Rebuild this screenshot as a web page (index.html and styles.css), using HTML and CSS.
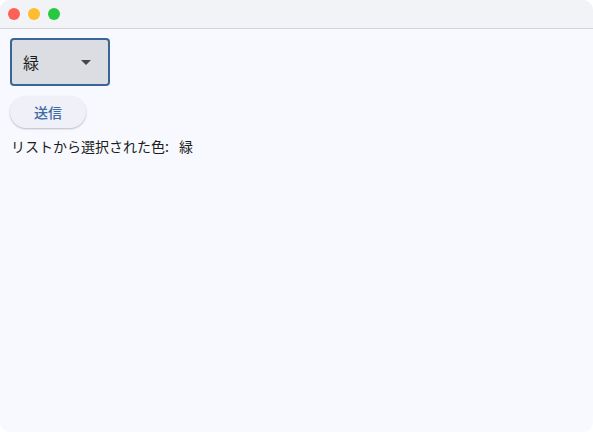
FILE: index.html
```html
<!DOCTYPE html>
<html lang="ja">
<head>
<meta charset="utf-8">
<link rel="stylesheet" href="styles.css">
</head>
<body>
<div class="window">
  <div class="titlebar">
    <span class="dot red"></span>
    <span class="dot yellow"></span>
    <span class="dot green"></span>
  </div>
  <div class="content">
    <div class="select">
      <span class="select-value">緑</span>
      <span class="arrow"></span>
    </div>
    <button class="submit">送信</button>
    <p class="result">リストから選択された色:<span class="value">緑</span></p>
  </div>
</div>
</body>
</html>
```

FILE: styles.css
```css
html, body {
  margin: 0;
  padding: 0;
  background: #ffffff;
}
body {
  font-family: "Noto Sans CJK JP", "Noto Sans", sans-serif;
  width: 593px;
  height: 432px;
  overflow: hidden;
}
.window {
  width: 593px;
  height: 432px;
  border-radius: 10px;
  overflow: hidden;
  background: #f8f9fe;
  display: flex;
  flex-direction: column;
}
.titlebar {
  height: 28px;
  background: #f2f3f7;
  border-bottom: 1px solid #d4d5da;
  display: flex;
  align-items: center;
  gap: 8px;
  padding-left: 8px;
  flex-shrink: 0;
}
.dot {
  width: 12px;
  height: 12px;
  border-radius: 50%;
}
.red { background: #fe5f57; }
.yellow { background: #febc2e; }
.green { background: #28c840; }
.content {
  padding: 9px 10px;
  display: flex;
  flex-direction: column;
  align-items: flex-start;
}
.select {
  box-sizing: border-box;
  width: 100px;
  height: 48px;
  border: 2px solid #3b6597;
  border-radius: 4px;
  background: #dcdde2;
  display: flex;
  align-items: center;
  justify-content: space-between;
  padding: 0 17px 0 11px;
}
.select-value {
  font-size: 16px;
  color: #1b1c20;
}
.arrow {
  width: 0;
  height: 0;
  border-left: 5px solid transparent;
  border-right: 5px solid transparent;
  border-top: 5px solid #45474d;
}
.submit {
  margin-top: 10px;
  width: 76px;
  height: 32px;
  border: none;
  border-radius: 16px;
  background: #eff0f8;
  box-shadow: 0 1px 2px rgba(0,0,0,0.25);
  color: #3d6aa4;
  font-family: "Noto Sans CJK JP", "Noto Sans", sans-serif;
  font-size: 14px;
  font-weight: 500;
  padding: 0;
}
.result {
  margin: 8px 0 0 1px;
  font-size: 14px;
  color: #1b1c20;
  line-height: 20px;
}
.value {
  margin-left: 10px;
}
```
